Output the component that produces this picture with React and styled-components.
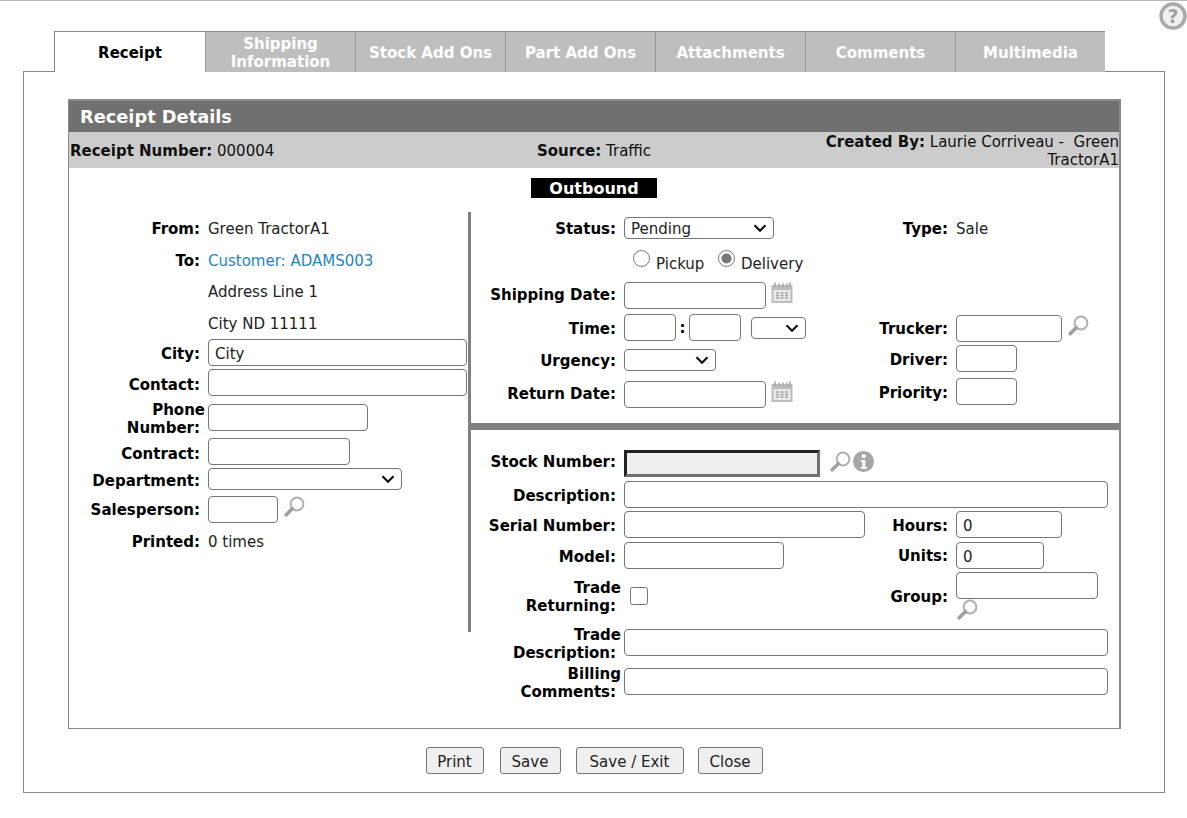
import React from "react";
import styled, { createGlobalStyle } from "styled-components";

const GlobalStyle = createGlobalStyle`
  html, body {
    margin: 0;
    padding: 0;
    background: #fff;
  }
  body {
    font-family: "DejaVu Sans", Verdana, sans-serif;
    font-size: 15px;
    color: #222;
  }
  input, select, button {
    font-family: "DejaVu Sans", Verdana, sans-serif;
    font-size: 15px;
    box-sizing: border-box;
  }
`;

const Page = styled.div`
  width: 1187px;
  border-top: 1px solid #bbb;
`;

const Header = styled.div`
  display: flex;
  align-items: flex-start;
`;

const HelpIcon = styled.svg`
  width: 28px;
  height: 28px;
  margin-left: auto;
  margin-top: 1px;
`;

const Tabs = styled.div`
  display: flex;
  margin: 30px 0 -1px 54px;
  position: relative;
  z-index: 1;
`;

const Tab = styled.div`
  box-sizing: border-box;
  width: ${props => props.$active ? 151 : 150}px;
  height: 41px;
  padding-top: 2px;
  display: flex;
  align-items: center;
  justify-content: center;
  text-align: center;
  font-weight: bold;
  line-height: 18px;
  border-top: 1px solid #888;
  border-left: 1px solid ${props => props.$active ? '#888' : '#999'};
  background: ${props => props.$active ? '#fff' : '#bebebe'};
  color: ${props => props.$active ? '#000' : '#fff'};
`;

const Panel = styled.div`
  box-sizing: border-box;
  width: 1142px;
  height: 722px;
  margin-left: 23px;
  padding: 27px 44px 0;
  border: 1px solid #888;
`;

const Card = styled.div`
  box-sizing: border-box;
  width: 1053px;
  height: 630px;
  border: 1px solid #888;
  border-top: 2px solid #8c8c8c;
  border-right-width: 2px;
`;

const CardTitle = styled.div`
  height: 31px;
  padding-left: 11px;
  background: #707070;
  color: #fff;
  font-size: 17.8px;
  font-weight: bold;
  line-height: 31px;
`;

const InfoBar = styled.div`
  display: flex;
  align-items: center;
  height: 36px;
  padding-left: 1px;
  background: #ccc;
  color: #111;
`;

const InfoItem = styled.div`
  box-sizing: border-box;
  flex: none;
  width: ${props => props.$w}px;
  padding-top: 2px;
  line-height: 18px;
  text-align: ${props => props.$right ? 'right' : 'left'};
`;

const Outbound = styled.div`
  width: 126px;
  height: 20px;
  margin: 10px auto 14px;
  background: #000;
  color: #fff;
  font-size: 16px;
  font-weight: bold;
  line-height: 22px;
  text-align: center;
`;

const Body = styled.div`
  display: flex;
  align-items: flex-start;
`;

const LeftCol = styled.div`
  flex: none;
  width: 399px;
  height: 420px;
  border-right: 3px solid #808080;
`;

const RightCol = styled.div`
  flex: none;
  width: 648px;
`;

const UpperRight = styled.div`
  display: flex;
  height: 211px;
`;

const SubCol = styled.div`
  width: ${props => props.$w}px;
`;

const HDivider = styled.div`
  height: 7px;
  background: #808080;
`;

const Row = styled.div`
  display: flex;
  align-items: center;
  height: ${props => props.$h || 27}px;
  margin-top: ${props => props.$mt || 0}px;
`;

const Pair = styled.div`
  display: flex;
  align-items: center;
  width: ${props => props.$w}px;
`;

const Label = styled.div`
  flex: none;
  width: ${props => props.$w || 145}px;
  margin-right: 8px;
  margin-bottom: ${props => props.$lift || 0}px;
  padding-top: 2px;
  color: #000;
  font-weight: bold;
  line-height: 18px;
  text-align: right;
`;

const Overhang = styled.span`
  margin-right: -5px;
`;

const Value = styled.div`
  padding-top: 2px;
  color: ${props => props.$link ? '#1f86c4' : '#222'};
`;

const TextInput = styled.input`
  flex: none;
  width: ${props => props.$w}px;
  height: 27px;
  padding: 2px 6px 0;
  border: 1px solid #767676;
  border-radius: 4px;
  background: #fff;
  color: #222;
`;

const LockedInput = styled(TextInput)`
  border-width: 3px;
  border-style: solid;
  border-color: #222 #707070 #707070 #222;
  border-radius: 0;
  background: #efefef;
`;

const chevron = `url("data:image/svg+xml,%3Csvg xmlns='http://www.w3.org/2000/svg' width='14' height='8' viewBox='0 0 14 8'%3E%3Cpath d='M1.5 1.2l5.5 5.5 5.5-5.5' fill='none' stroke='%23111' stroke-width='2.2'/%3E%3C/svg%3E")`;

const Dropdown = styled.select`
  flex: none;
  width: ${props => props.$w}px;
  height: 22px;
  margin-left: ${props => props.$ml || 0}px;
  padding: 2px 2px 0 6px;
  border: 1px solid #767676;
  border-radius: 4px;
  appearance: none;
  background: #fff ${chevron} no-repeat right 6px center;
  color: #222;
`;

const RadioRow = styled.div`
  display: flex;
  align-items: center;
  height: 38px;
  padding-left: 162px;
`;

const Radio = styled.input`
  width: 17px;
  height: 17px;
  margin: -10px 6px 0 0;
  accent-color: #777;
`;

const RadioText = styled.span`
  width: ${props => props.$w}px;
  padding-top: 2px;
  color: #222;
`;

const Check = styled.input`
  width: 18px;
  height: 18px;
  margin: 0 0 0 6px;
`;

const Colon = styled.span`
  width: 13px;
  font-weight: bold;
  text-align: center;
  color: #000;
`;

const IconSvg = styled.svg`
  flex: none;
  width: ${props => props.$size || 21}px;
  height: ${props => props.$size || 21}px;
  margin-left: ${props => props.$ml ?? 6}px;
  margin-top: ${props => props.$mt ?? -7}px;
`;

const GroupField = styled.div`
  display: flex;
  flex-direction: column;
`;

const ButtonRow = styled.div`
  display: flex;
  justify-content: center;
  gap: 15px;
  margin-top: 18px;
`;

const Button = styled.button`
  width: ${props => props.$w}px;
  height: 27px;
  margin-left: ${props => props.$ml || 0}px;
  padding: 2px 0 0;
  border: 1px solid #767676;
  border-radius: 3px;
  background: #efefef;
  color: #222;
`;

const SearchIcon = (props) => (
  <IconSvg viewBox="0 0 21 21" {...props}>
    <circle cx="13" cy="8" r="6.4" fill="#fff" stroke="#b0b0b0" strokeWidth="2" />
    <path d="M8.3 12.7L2.2 18.8" stroke="#a0a0a0" strokeWidth="3.6" strokeLinecap="round" />
  </IconSvg>
);

const CalendarIcon = () => (
  <IconSvg viewBox="0 0 22 22" $size={22} $ml={5} $mt={-5}>
    <rect x="0.5" y="3" width="21" height="18" fill="#bdbdbd" />
    <path d="M4 0.5v5M8 1.5v4M12 1.5v4M16 1.5v4M19 0.5v5" stroke="#a8a8a8" strokeWidth="1.6" />
    <rect x="2.5" y="8" width="17" height="11" fill="#e9e9e9" />
    <path d="M5 11h3M9.5 11h3M14 11h3M5 13.5h3M9.5 13.5h3M14 13.5h3M5 16h3M9.5 16h3M14 16h3" stroke="#a2a2a2" strokeWidth="1.4" />
  </IconSvg>
);

const InfoIcon = () => (
  <IconSvg viewBox="0 0 21 21" $ml={2} $mt={-5}>
    <circle cx="10.5" cy="10.5" r="10.5" fill="#a6a6a6" />
    <circle cx="10.7" cy="5.2" r="2.1" fill="#fff" />
    <path d="M7.8 9h4.6v7h1.6v1.8H7.8V16h1.6v-5.2H7.8z" fill="#fff" />
  </IconSvg>
);

const tabs = ['Shipping Information', 'Stock Add Ons', 'Part Add Ons', 'Attachments', 'Comments', 'Multimedia'];

export default function App() {
  return (
    <Page>
      <GlobalStyle />
      <Header>
        <Tabs>
          <Tab $active>Receipt</Tab>
          {tabs.map(name => <Tab key={name}>{name}</Tab>)}
        </Tabs>
        <HelpIcon viewBox="0 0 28 28">
          <circle cx="14" cy="14" r="12" fill="#f1f1f1" stroke="#a8a8a8" strokeWidth="3.4" />
          <text x="14" y="20.5" textAnchor="middle" fontSize="19" fontWeight="bold" fontFamily="DejaVu Sans" fill="#a0a0a0">?</text>
        </HelpIcon>
      </Header>
      <Panel>
        <Card>
          <CardTitle>Receipt Details</CardTitle>
          <InfoBar>
            <InfoItem $w={467}><b>Receipt Number:</b> 000004</InfoItem>
            <InfoItem $w={287}><b>Source:</b> Traffic</InfoItem>
            <InfoItem $w={295} $right><b>Created By:</b> Laurie Corriveau -&nbsp; Green TractorA1</InfoItem>
          </InfoBar>
          <Outbound>Outbound</Outbound>
          <Body>
            <LeftCol>
              <Row $h={32}><Label $w={131}>From:</Label><Value>Green TractorA1</Value></Row>
              <Row $h={31}><Label $w={131}>To:</Label><Value $link>Customer: ADAMS003</Value></Row>
              <Row $h={32}><Label $w={131} /><Value>Address Line 1</Value></Row>
              <Row $h={32}><Label $w={131} /><Value>City ND 11111</Value></Row>
              <Row><Label $w={131}>City:</Label><TextInput $w={259} defaultValue="City" /></Row>
              <Row $mt={3}><Label $w={131} $lift={-2}>Contact:</Label><TextInput $w={259} /></Row>
              <Row $mt={8}><Label $w={131}><Overhang>Phone </Overhang><br />Number:</Label><TextInput $w={160} /></Row>
              <Row $mt={7}><Label $w={131} $lift={-2}>Contract:</Label><TextInput $w={142} /></Row>
              <Row $h={22} $mt={3}><Label $w={131} $lift={-2}>Department:</Label><Dropdown $w={194} /></Row>
              <Row $mt={6}><Label $w={131} $lift={2}>Salesperson:</Label><TextInput $w={70} /><SearchIcon /></Row>
              <Row $h={32} $mt={2}><Label $w={131}>Printed:</Label><Value>0 times</Value></Row>
            </LeftCol>
            <RightCol>
              <UpperRight>
                <SubCol $w={399}>
                  <Row $h={32}>
                    <Label>Status:</Label>
                    <Dropdown $w={150} defaultValue="Pending"><option>Pending</option></Dropdown>
                  </Row>
                  <RadioRow>
                    <Radio type="radio" name="ship" />
                    <RadioText $w={62}>Pickup</RadioText>
                    <Radio type="radio" name="ship" defaultChecked />
                    <RadioText>Delivery</RadioText>
                  </RadioRow>
                  <Row><Label $lift={4}>Shipping Date:</Label><TextInput $w={142} /><CalendarIcon /></Row>
                  <Row $mt={5}>
                    <Label>Time:</Label>
                    <TextInput $w={52} />
                    <Colon>:</Colon>
                    <TextInput $w={52} />
                    <Dropdown $w={55} $ml={10} />
                  </Row>
                  <Row $h={22} $mt={8}><Label>Urgency:</Label><Dropdown $w={92} /></Row>
                  <Row $mt={10}><Label $lift={4}>Return Date:</Label><TextInput $w={142} /><CalendarIcon /></Row>
                </SubCol>
                <SubCol $w={249}>
                  <Row $h={32}><Label $w={78}>Type:</Label><Value>Sale</Value></Row>
                  <Row $mt={71}><Label $w={78} $lift={2}>Trucker:</Label><TextInput $w={106} /><SearchIcon /></Row>
                  <Row $mt={3}><Label $w={78}>Driver:</Label><TextInput $w={61} /></Row>
                  <Row $mt={6}><Label $w={78}>Priority:</Label><TextInput $w={61} /></Row>
                </SubCol>
              </UpperRight>
              <HDivider />
              <Row $mt={20}>
                <Label $lift={5}>Stock Number:</Label>
                <LockedInput $w={196} />
                <SearchIcon $ml={10} $mt={-5} />
                <InfoIcon />
              </Row>
              <Row $mt={4}><Label>Description:</Label><TextInput $w={484} /></Row>
              <Row $mt={3}>
                <Pair $w={399}><Label>Serial Number:</Label><TextInput $w={241} /></Pair>
                <Pair><Label $w={78}>Hours:</Label><TextInput $w={106} defaultValue="0" /></Pair>
              </Row>
              <Row $mt={4}>
                <Pair $w={399}><Label>Model:</Label><TextInput $w={160} /></Pair>
                <Pair><Label $w={78} $lift={2}>Units:</Label><TextInput $w={88} defaultValue="0" /></Pair>
              </Row>
              <Row $h={48} $mt={3}>
                <Pair $w={399}><Label><Overhang>Trade </Overhang><br />Returning:</Label><Check type="checkbox" /></Pair>
                <Pair>
                  <Label $w={78}>Group:</Label>
                  <GroupField>
                    <TextInput $w={142} />
                    <SearchIcon $ml={1} $mt={0} />
                  </GroupField>
                </Pair>
              </Row>
              <Row $mt={9}><Label><Overhang>Trade </Overhang><br />Description:</Label><TextInput $w={484} /></Row>
              <Row $mt={12}><Label><Overhang>Billing </Overhang><br />Comments:</Label><TextInput $w={484} /></Row>
            </RightCol>
          </Body>
        </Card>
        <ButtonRow>
          <Button $w={58}>Print</Button>
          <Button $w={61} $ml={1}>Save</Button>
          <Button $w={108}>Save / Exit</Button>
          <Button $w={65} $ml={-1}>Close</Button>
        </ButtonRow>
      </Panel>
    </Page>
  );
}
